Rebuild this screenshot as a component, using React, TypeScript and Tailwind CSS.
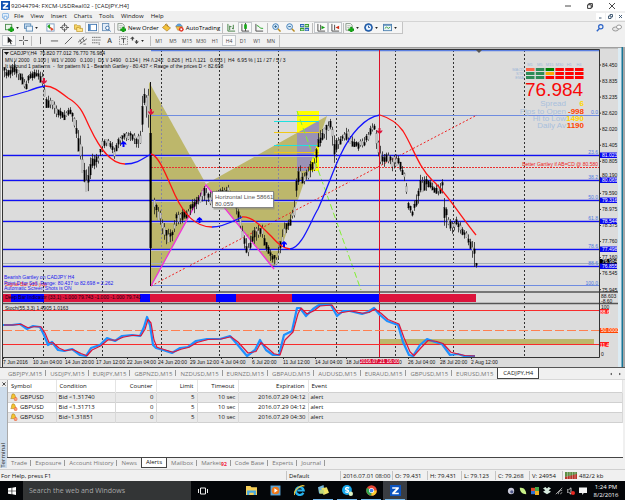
import type { ReactNode } from "react";

/* ---------- chart data ---------- */

// [x, high, low] envelope of price action in chart coordinates
const envelope: [number, number, number][] = [
  [3, 64, 78], [8, 68, 80], [14, 60, 77], [20, 69, 85], [26, 78, 92], [30, 68, 81], [36, 68, 80], [42, 72, 88],
  [46, 92, 112], [52, 97, 111], [58, 107, 121], [64, 109, 121], [70, 107, 116], [75, 114, 132], [80, 132, 168],
  [84, 160, 187], [87, 170, 200], [92, 149, 173], [98, 154, 166], [102, 138, 152], [108, 136, 147], [114, 145, 160],
  [118, 136, 149], [124, 131, 142], [130, 131, 142], [136, 133, 149], [140, 130, 148], [142, 92, 140], [144, 88, 108],
  [148, 84, 130], [154, 196, 216], [160, 208, 228], [165, 226, 244], [172, 228, 246], [176, 211, 228], [182, 207, 224],
  [188, 206, 218], [194, 194, 214], [198, 191, 206], [204, 184, 203], [208, 189, 207], [215, 190, 204], [222, 186, 198],
  [228, 184, 197], [234, 193, 208], [240, 213, 230], [244, 233, 250], [248, 243, 260], [252, 228, 246], [258, 224, 240],
  [262, 224, 239], [266, 238, 254], [272, 249, 266], [276, 255, 268], [280, 237, 256], [284, 221, 238], [289, 218, 230],
  [294, 198, 218], [297, 164, 192], [299, 161, 178], [303, 172, 188], [308, 163, 181], [314, 156, 174], [318, 128, 153],
  [322, 126, 146], [326, 118, 142], [330, 116, 130], [334, 134, 163], [338, 136, 150], [342, 132, 143], [347, 126, 144],
  [352, 136, 148], [358, 139, 151], [364, 136, 149], [370, 124, 138], [374, 121, 132], [377, 133, 162], [383, 153, 168],
  [388, 150, 165], [392, 156, 172], [397, 149, 166], [401, 160, 176], [405, 174, 186], [408, 198, 212], [412, 208, 219],
  [416, 190, 212], [420, 174, 198], [424, 170, 192], [428, 177, 191], [434, 184, 194], [438, 182, 199], [442, 179, 194],
  [444, 186, 233], [448, 213, 230], [452, 220, 234], [456, 216, 227], [460, 222, 238], [466, 230, 240], [470, 236, 252],
  [474, 240, 268], [476, 261, 268],
];

function wobble(i: number) {
  const v = Math.sin(i * 12.9898) * 43758.5453;
  return v - Math.floor(v);
}

function envelopeAt(x: number): [number, number] {
  for (let i = 1; i < envelope.length; i++) {
    const [x0, h0, l0] = envelope[i - 1];
    const [x1, h1, l1] = envelope[i];
    if (x <= x1) {
      const t = (x - x0) / (x1 - x0);
      return [h0 + (h1 - h0) * t, l0 + (l1 - l0) * t];
    }
  }
  return [261, 268];
}

const candles = Array.from({ length: 237 }, (_, i) => 4 + i * 2)
  .filter((x) => x < 149 || x > 152)
  .map((x, i) => {
    const [high, low] = envelopeAt(x);
    const range = low - high;
    const top = high + range * (0.2 + 0.3 * wobble(i));
    return {
      x,
      high: high + range * 0.3 * wobble(i + 500),
      low: low - range * 0.3 * wobble(i + 900),
      top,
      height: Math.max(1, range * (0.15 + 0.3 * wobble(i + 300))),
      hollow: wobble(i + 70) > 0.6,
    };
  });

const averages = [
  { color: "#1414ff", d: "M3 97Q8 97 14 95L28 91Q38 87 45 86" },
  { color: "#ff1414", d: "M45 86C53 86 59 91 68 98C82 106 84 116 90 128C99 147 110 164 125 164" },
  { color: "#1414ff", d: "M125 164C137 164 144 158 151 154" },
  { color: "#ff1414", d: "M151 154C159 156 166 175 175 195C184 214 195 227 212 227" },
  { color: "#1414ff", d: "M212 227C224 227 233 221 242 217" },
  { color: "#ff1414", d: "M242 217C252 216 262 227 272 237C280 246 284 248 290 249" },
  { color: "#1414ff", d: "M290 249C302 248 310 222 318 209C326 192 334 168 340 156C350 134 365 117 380 115" },
  { color: "#ff1414", d: "M380 115C390 118 398 124 403 131C413 147 418 166 432 180C446 192 456 210 476 235" },
];

const stochastic: [number, number][] = [
  [3, 325], [12, 325], [20, 324], [27, 329], [33, 326], [40, 327], [44, 335], [48, 345], [52, 342], [58, 350], [64, 351],
  [72, 349], [80, 355], [86, 356], [91, 348], [100, 345], [107, 338], [115, 341], [122, 336], [132, 335], [140, 336],
  [144, 327], [147, 317], [150, 325], [153, 345], [156, 348], [163, 350], [172, 353], [180, 348], [188, 347], [196, 341],
  [207, 339], [220, 339], [230, 336], [237, 344], [247, 356], [255, 350], [260, 340], [266, 350], [273, 355], [279, 355],
  [284, 335], [292, 331], [297, 308], [300, 308], [306, 316], [313, 309], [319, 305], [331, 305], [337, 316], [343, 311],
  [350, 311], [362, 314], [368, 312], [374, 308], [380, 315], [387, 321], [398, 325], [403, 342], [409, 355], [413, 356],
  [420, 345], [427, 339], [435, 342], [442, 344], [450, 355], [458, 354], [464, 356], [475, 356],
];

const asPoints = (pts: [number, number][]) => pts.map((p) => p.join(",")).join(" ");
const signal = stochastic.map(([x, y], i): [number, number] => {
  const prev = stochastic[Math.max(0, i - 1)][1];
  return [Math.min(x + 1, 475), y * 0.75 + prev * 0.25];
});

const priceTicks = [
  "84.450", "83.835", "83.235", "82.620", "82.020", "81.405", "80.805", "80.190", "79.590", "78.975", "78.375",
  "77.760", "77.160", "76.545", "75.945",
];

const levels = [
  { y: 155, price: "81.023", fib: "23.6" },
  { y: 180, price: "80.069", fib: "38.2" },
  { y: 200, price: "79.316", fib: "50.0" },
  { y: 221, price: "78.544", fib: "61.8" },
  { y: 249, price: "77.498", fib: "78.6" },
  { y: 266, price: "76.855", fib: "88.6" },
];

const dates: [number, string][] = [
  [3, "7 Jun 2016"], [33, "10 Jun 04:00"], [65, "14 Jun 20:00"], [96, "17 Jun 12:00"], [127, "22 Jun 04:00"],
  [158, "24 Jun 20:00"], [190, "29 Jun 12:00"], [221, "4 Jul 04:00"], [252, "6 Jul 20:00"], [283, "11 Jul 12:00"],
  [315, "14 Jul 04:00"], [346, "18 Jul"], [408, "26 Jul 04:00"], [440, "28 Jul 20:00"], [471, "2 Aug 12:00"],
];

const heat = [
  ["#ff6347", "#2e8b57", "#008000", "#ff0000", "#ff0000", "#ff0000"],
  ["#2e8b57", "#2e8b57", "#ffa500", "#ff0000", "#ff0000", "#ff0000"],
  ["#2e8b57", "#2e8b57", "#ff0000", "#ff0000", "#ff0000", "#ff0000"],
];

const stats: [string, string, string, number][] = [
  ["Spread", "6", "#ffd700", 106],
  ["Pips to Open", "-998", "#ff4500", 114],
  ["Hi to Low", "1490", "#ffd700", 121],
  ["Daily Av", "1190", "#ff4500", 128],
];

function Arrow({ x, y, up }: { x: number; y: number; up?: boolean }) {
  return (
    <path
      transform={`translate(${x} ${y})${up ? " scale(1 -1)" : ""}`}
      d="M-1 -3H1V0L3 -1L2.5 1L0 3L-2.5 1L-3 -1L-1 0Z"
      fill={up ? "#0000ff" : "#dc143c"}
    />
  );
}

function Chart() {
  return (
    <svg viewBox="0 47 625 320" className="block w-full font-['Liberation_Sans',sans-serif] text-[5px]" role="img" aria-label="CADJPY H4 chart">
      <rect x="0" y="47" width="625" height="320" fill="#f0f0f0" />
      <rect x="2" y="48" width="617" height="319" fill="#dcdcdc" />
      <rect x="0" y="47" width="625" height="1.5" fill="#a0a0a0" />
      <rect x="0" y="48" width="1" height="319" fill="#b0b0b0" />
      <rect x="618" y="48" width="4" height="319" fill="#dcebf3" />
      <rect x="621.5" y="47" width="1.5" height="320" fill="#187595" />
      <rect x="623" y="47" width="2" height="320" fill="#a6a6a6" />

      <g stroke="#333" strokeWidth="1" strokeDasharray="2 2">
        {[43.5, 102.5, 161.5, 219.5, 278.5, 336.5, 395.5, 453.5, 524.5].map((x) => (
          <path key={x} d={`M${x} 50V357`} />
        ))}
      </g>

      <path d="M149 82L206 184L151 286Z" fill="#bdb76b" />
      <path d="M206 184L327 116L274 269Z" fill="#bdb76b" />
      <rect x="297" y="111" width="22" height="60" fill="#ffff00" />
      <path d="M297 133L319 120.5V139L308 171H297Z" fill="#9a93b6" />
      <path d="M161.5 105V267M219.5 177V200M278.5 145V257" stroke="#8a86a0" strokeDasharray="2 2" />
      <path d="M274 121.5H319M274 145.5H319" stroke="#20e0e0" />
      <path d="M274 132.5H319M274 152.5H319" stroke="#f0c818" />

      <path d="M151 50.5H599" stroke="#5b7fe0" strokeWidth="1.5" />
      <path d="M151 115.5H599M151 285.5H599" stroke="#6f8ce0" />
      <path d="M3 263.5H599" stroke="#a4aeb8" />
      <path d="M151 167.5H599" stroke="#e83030" strokeDasharray="2 1" />
      <path d="M151 286L477 115" stroke="#f02020" strokeDasharray="2 2" />
      <path d="M297 111L361 290" stroke="#80f030" strokeDasharray="6 3" />
      {levels.map((l) => (
        <g key={l.y}>
          <path d={`M3 ${l.y + 1.5}H599`} stroke="#f2f2c4" />
          <path d={`M3 ${l.y + 0.5}H599`} stroke="#1010f4" strokeWidth="1.3" />
          <text x="598" y={l.y - 1} textAnchor="end" fill="#4f78e0">{l.fib}</text>
        </g>
      ))}
      <text x="598" y="114" textAnchor="end" fill="#4f78e0">0.0</text>
      <text x="598" y="285" textAnchor="end" fill="#4f78e0">100.0</text>
      <path d="M151 286L206 185L274 269" fill="none" stroke="#f030d8" strokeWidth="1.3" />

      {candles.map((c) => (
        <g key={c.x}>
          <path d={`M${c.x + 0.5} ${c.high}V${c.low}`} stroke="#222" strokeWidth="0.8" />
          <rect
            x={c.x - 0.2}
            y={c.top}
            width="1.5"
            height={c.height}
            fill={c.hollow ? "#c4c4c4" : "#000"}
            stroke={c.hollow ? "#666" : "#000"}
            strokeWidth="0.2"
          />
        </g>
      ))}
      <path d="M150.5 82V286" stroke="#111" />
      <rect x="149.5" y="133" width="2.2" height="115" fill="#000" />

      {averages.map((a) => (
        <path key={a.d} d={a.d} fill="none" stroke={a.color} strokeWidth="1.3" />
      ))}
      <Arrow x={44} y={81} />
      <Arrow x={151} y={112} />
      <Arrow x={379.5} y={131} />
      <Arrow x={123.5} y={144} up />
      <Arrow x={199.5} y={220} up />
      <Arrow x={284} y={244} up />
      <path d="M379.5 50V357" stroke="#dc1028" />
      <path d="M476 50L482 50L479 53Z" fill="#555" />

      <g fill="#111">
        <path d="M4 52H9L6.5 55Z" />
        <text x="10" y="55">CADJPY,H4&nbsp; 76.820 77.012 76.770 76.984</text>
        <text x="5" y="61.500">MN \/ 2000&nbsp;&nbsp; 0.100 |&nbsp; W1 \/ 2000&nbsp;&nbsp; 0.100 |&nbsp; D1 \/ 1490&nbsp;&nbsp; 0.134 |&nbsp; H4 /\.242&nbsp;&nbsp; 0.826 |&nbsp; H1 /\.121&nbsp;&nbsp; 0.653 |&nbsp; H4&nbsp; 6.95 % | 11 / 27 / 5 / 3</text>
        <text x="5" y="67.500">It is found 1 patterns&nbsp; -&nbsp; for pattern N 1 - Bearish Gartley - 80.437 &lt; Range of the prices D &lt; 82.698</text>
      </g>
      <text x="5" y="285.500" fill="#ff2020">Signal Bar v10 yop</text>
      <g fill="#1818ee">
        <text x="4" y="279">Bearish Gartley on CADJPY H4</text>
        <text x="4" y="284.500">Point D for Sell, Range: 80.437 to 82.698 = 2.262</text>
        <text x="4" y="290">Automatic Screen Shots is ON</text>
      </g>

      <g fill="#a0b8d8" className="text-[4px]">
        {["M1", "M5", "M15", "M30", "H1", "H4"].map((t, i) => (
          <text key={t} x={530 + i * 9.8} y="66" textAnchor="middle">{t}</text>
        ))}
        {["MACD", "STR", "EMA"].map((t, i) => (
          <text key={t} x="524" y={71 + i * 4} textAnchor="end">{t}</text>
        ))}
      </g>
      {heat.map((row, r) =>
        row.map((color, c) => <rect key={`${r}-${c}`} x={526 + c * 9.8} y={68 + r * 4} width="8.5" height="3" fill={color} />),
      )}
      <text x="525" y="96" fill="#f80808" className="text-[19px]">76.984</text>
      {stats.map(([label, value, color, y]) => (
        <g key={label} className="text-[8px]">
          <text x="566" y={y} textAnchor="end" fill="#a9c0dc">{label}</text>
          <text x="584" y={y} textAnchor="end" fill={color} className="font-bold">{value}</text>
        </g>
      ))}
      <text x="598" y="165.500" textAnchor="end" fill="#f02020">Better Gartley if AB=CD @ 80.580</text>

      <rect x="3" y="294" width="473" height="8" fill="#dc143c" />
      {[[11, 33], [140, 10], [216, 20], [292, 87]].map(([x, w]) => (
        <rect key={x} x={x} y="294" width={w} height="8" fill="#0000ff" />
      ))}
      <path d="M3 292H618M3 303.500H618" stroke="#555" strokeWidth="1.600" />
      <text x="5" y="299" fill="#220010">Deep Bar Indicator (33,1) -1.000 79.743 -1.000 -1.000 79.743</text>

      <rect x="380" y="339" width="214" height="5" fill="#bdb76b" />
      <path d="M3 310.500H599M3 344.500H599" stroke="#f82c2c" />
      <path d="M3 330.500H599" stroke="#ff7f50" strokeDasharray="9 3" />
      <polyline points={asPoints(stochastic)} fill="none" stroke="#1e90ff" strokeWidth="2.200" strokeLinejoin="round" />
      <polyline points={asPoints(signal)} fill="none" stroke="#dc143c" strokeWidth="1.200" strokeLinejoin="round" />
      <text x="5" y="309.500" fill="#111">Stoch(55,3,3) 1.4905 1.0163</text>

      <path d="M2.500 367V49.500H599.500V357.500H2.500" fill="none" stroke="#333" />
      {dates.map(([x, label]) => (
        <g key={label}>
          <path d={`M${x + 0.5} 357V359`} stroke="#333" />
          <text x={x} y="363.500" fill="#111">{label}</text>
        </g>
      ))}
      <text x="399" y="363.500" fill="#111">0</text>
      <rect x="360" y="359" width="39" height="5" fill="#dc1038" />
      <text x="379.500" y="363.300" textAnchor="middle" fill="#fff">2016.07.21 16:00</text>

      {priceTicks.map((p, i) => (
        <g key={p}>
          <path d={`M599 ${65 + i * 16.05}H601`} stroke="#333" />
          <text x="602" y={66.800 + i * 16.05 - (p === "80.190" ? 2 : 0)} fill="#111">{p}</text>
        </g>
      ))}
      <rect x="600" y="259" width="17" height="5" fill="#000" />
      <text x="602" y="263" fill="#fff">76.984</text>
      {levels.map((l) => (
        <g key={l.price}>
          <rect x="600" y={l.y - 2.5} width="17" height="5.500" fill="#0808f0" />
          <text x="602" y={l.y + 2} fill="#fff">{l.price}</text>
        </g>
      ))}
      <g fill="#111">
        <text x="601" y="298">88.603</text>
        <text x="601" y="303">-8.60</text>
        <text x="601" y="308.500">100</text>
        <text x="601" y="356">0</text>
      </g>
      <rect x="600" y="309" width="9" height="5" fill="#ff1c1c" />
      <text x="600" y="313.500" fill="#fff">88.6</text>
      <rect x="600" y="328" width="18" height="5" fill="#ff4500" />
      <text x="601" y="332.300" fill="#fff">50.0000</text>
      <rect x="600" y="342" width="9" height="5" fill="#ff1c1c" />
      <text x="600" y="346.500" fill="#fff">11.4</text>

      <rect x="213.500" y="192.500" width="61" height="17" fill="#8b8b7c" opacity="0.6" />
      <rect x="212.500" y="191.500" width="61" height="16" fill="#fff" stroke="#777" strokeWidth="0.8" />
      <g fill="#555" className="text-[6px]">
        <text x="215" y="198.500">Horizontal Line 58661</text>
        <text x="215" y="205.500">80.059</text>
      </g>
    </svg>
  );
}

/* ---------- toolbar ---------- */

function Icon({ children, size = "size-[9px]" }: { children: ReactNode; size?: string }) {
  return (
    <svg viewBox="0 0 10 10" className={`${size} shrink-0`} fill="none" strokeWidth="1" aria-hidden="true">
      {children}
    </svg>
  );
}

const plus = <path d="M6 4.500H8V6.500H10V8.500H8V10H6V8.500H4V6.500H6Z" fill="#12b012" stroke="#067806" strokeWidth="0.5" />;

const icons = {
  newChart: <><rect x="0.5" y="1.500" width="7" height="6" fill="#eaf4ea" stroke="#4a8a4a" />{plus}</>,
  profiles: <><rect x="0.5" y="1" width="7" height="5" fill="#cfe2f5" stroke="#5b8ab5" /><rect x="2.500" y="3.500" width="7" height="5.500" fill="#eef5fb" stroke="#5b8ab5" /></>,
  market: <><rect x="1" y="1" width="8" height="8" fill="#fff" stroke="#7c9cc0" /><path d="M2 3.500L4 2V6ZM3 4L5 5" fill="#18a018" stroke="#18a018" /><path d="M5 5L8 7L6 8Z" fill="#e04020" stroke="#e04020" /></>,
  target: <><circle cx="5" cy="5" r="3" stroke="#555" /><path d="M5 0V4M5 6V10M0 5H4M6 5H10" stroke="#555" /></>,
  navigator: <><path d="M0.500 2H3L4 3H7V7H0.500Z" fill="#f6d566" stroke="#b98a16" strokeWidth="0.7" /><path d="M3 5H5.500L6.500 6H9.500V9.500H3Z" fill="#ffe58a" stroke="#b98a16" strokeWidth="0.700" /></>,
  terminal: <><rect x="0.5" y="1.500" width="9" height="7" fill="#fff" stroke="#3c74b0" /><path d="M1 2H3V8H1Z" fill="#4c88c8" /></>,
  tester: <><rect x="0.500" y="0.500" width="7" height="8" fill="#e4eef8" stroke="#6c92b8" /><circle cx="6" cy="5.500" r="2" fill="#fff" stroke="#3b6fa8" /><path d="M7.500 7L9.500 9.500" stroke="#3b6fa8" /></>,
  order: <><path d="M1 0.500H6L8 2.500V8H1Z" fill="#f2f6f2" stroke="#8a968a" /><path d="M2.500 3H6M2.500 5H5" stroke="#8a968a" strokeWidth="0.6" />{plus}</>,
  editor: <><path d="M0.500 5L4 2L9.500 5.500L5.500 9Z" fill="#f4c33c" stroke="#a87514" strokeWidth="0.700" /><path d="M3.500 2L5 1L7 4" stroke="#a87514" /></>,
  auto: <><path d="M1 4C2 0 7 0 8 4Z" fill="#5aa0e0" stroke="#2a68a8" strokeWidth="0.600" /><path d="M1 4H8L6 8H3Z" fill="#f2c04c" stroke="#a87514" strokeWidth="0.500" /><circle cx="7" cy="7" r="2.600" fill="#e02c1c" /><rect x="6" y="6" width="2" height="2" fill="#fff" /></>,
  bars: <path d="M1 1V9H9M3 3V8M3 4H5M7 2V7M5.500 6H7" stroke="#3a7a3a" />,
  candles: <><path d="M1 1V9H9M5 0V9" stroke="#444" /><rect x="3.500" y="1.500" width="3" height="5" fill="#18a818" /></>,
  line: <><path d="M1 1V9H9" stroke="#444" /><path d="M2 3C4 2 5 7 9 6" stroke="#18a018" /></>,
  zoomIn: <><circle cx="4" cy="4" r="3.200" fill="#d8ecfa" stroke="#3c78b4" /><path d="M2.500 4H5.500M4 2.500V5.500" stroke="#286090" /><path d="M6.500 6.500L9.500 9.500" stroke="#b88a20" strokeWidth="1.600" /></>,
  zoomOut: <><circle cx="4" cy="4" r="3.200" fill="#d8ecfa" stroke="#3c78b4" /><path d="M2.500 4H5.500" stroke="#286090" /><path d="M6.500 6.500L9.500 9.500" stroke="#b88a20" strokeWidth="1.600" /></>,
  tile: <><path d="M0 1H4.700V4.700H0ZM5.300 5.300H10V9H5.300Z" fill="#2c64b8" /><path d="M5.300 1H10V4.700H5.300ZM0 5.300H4.700V9H0Z" fill="#38a030" /><path d="M1 3H4M6 3H9M1 7.500H4M6 7.500H9" stroke="#fff" /></>,
  scroll: <><path d="M1 1V9H9M4 2V8" stroke="#444" /><path d="M5 3L9 5L5 7Z" fill="#18a018" /></>,
  shift: <><path d="M1 1V9H9M4 2V8" stroke="#444" /><path d="M9 3L5 5L9 7Z" fill="#d03018" /></>,
  clock: <><circle cx="5" cy="5" r="4.300" fill="#2c74c8" stroke="#1c4c90" /><circle cx="5" cy="5" r="2.800" fill="#eef6ff" /><path d="M5 3V5H6.500" stroke="#1c4c90" /></>,
  template: <><rect x="0.5" y="1.500" width="9" height="7" fill="#e8f2fa" stroke="#4c80b0" /><path d="M1 2.500H9" stroke="#4c80b0" /><path d="M2 6L4 4.500L6 6L8 4.500" stroke="#38a030" /></>,
  cursor: <path d="M3 0.500V8L5 6.500L6.500 9.500L7.500 9L6.200 6H8.500Z" fill="#222" />,
  cross: <path d="M5 0V4M5 6V10M0 5H4M6 5H10" stroke="#555" />,
  vline: <path d="M5 1V9" stroke="#555" />,
  hline: <path d="M1 5.500H9" stroke="#555" />,
  trend: <path d="M1 9L9 1" stroke="#555" />,
  channel: <path d="M0 7L7 1M2 9L10 3M2 4L4 8M5 2L7 6M6 9H9" stroke="#555" strokeWidth="0.9" />,
  fibo: <path d="M0 1.500H10M0 4.500H10M0 7.500H7M8 7V10" stroke="#666" strokeDasharray="1.500 0.500" />,
  label: <><rect x="0.5" y="0.500" width="9" height="9" stroke="#777" strokeDasharray="1 1" /><path d="M2.500 3H7.500M5 3V8" stroke="#444" /></>,
  arrows: <path d="M0 3L3 0.500L5 3L3.500 3V5H2V3ZM5 6H6.500V4.500H8V6H10L7.200 9Z" fill="#444" />,
};

type IconName = keyof typeof icons;

function Tool({ icon, menu, pressed, label }: { icon: IconName; menu?: boolean; pressed?: boolean; label?: string }) {
  const box = menu ? "w-[19px] justify-start gap-[2px]" : label ? "gap-[2px] px-px" : "w-[14px] justify-center";
  return (
    <button
      type="button"
      aria-label={label ?? icon}
      aria-pressed={pressed}
      className={`flex h-[11px] shrink-0 items-center whitespace-nowrap ${box} ${pressed ? "border border-[#c4c8cc] bg-[#fafafa]" : ""}`}
    >
      <Icon>{icons[icon]}</Icon>
      {label && <span>{label}</span>}
      {menu && <Caret />}
    </button>
  );
}

function Caret() {
  return <svg viewBox="0 0 4 3" className="h-[2px] w-[3px]" aria-hidden="true"><path d="M0 0H4L2 3Z" fill="#222" /></svg>;
}

function Divider() {
  return <span className="mx-px h-[10px] w-px shrink-0 bg-[#bdbdbd]" />;
}

function Toolbars() {
  return (
    <div className="bg-[#f0f0f0]">
      <div className="flex h-[13px] items-center border-t border-[#d4d4d4]">
        <div className="flex h-[12px] items-center border-r border-b border-[#c4c4c4] bg-[#f5f5f5] pl-[5px]">
          <Tool icon="newChart" menu />
          <Tool icon="profiles" menu />
          <Tool icon="market" />
          <Tool icon="target" />
          <Tool icon="navigator" />
          <Tool icon="terminal" pressed />
          <Tool icon="tester" />
          <Divider />
          <Tool icon="order" label="New Order" />
          <Tool icon="editor" />
          <Tool icon="auto" label="AutoTrading" />
          <Divider />
          <Tool icon="bars" />
          <Tool icon="candles" pressed />
          <Tool icon="line" />
          <Divider />
          <Tool icon="zoomIn" />
          <Tool icon="zoomOut" />
          <Tool icon="tile" />
          <Divider />
          <Tool icon="scroll" pressed />
          <Tool icon="shift" pressed />
          <Divider />
          <Tool icon="order" menu />
          <Tool icon="clock" menu />
          <Tool icon="template" menu />
        </div>
        <div className="ml-auto flex items-center gap-2 pr-[3px]">
          <Icon size="size-[8px]"><circle cx="6" cy="3.500" r="2.700" stroke="#2c64c8" strokeWidth="1.500" /><path d="M4 6L1 9" stroke="#2c64c8" strokeWidth="1.800" /></Icon>
          <Icon size="size-[10px]"><ellipse cx="3.500" cy="6" rx="3" ry="2" fill="#e8e8e8" stroke="#999" /><ellipse cx="7" cy="4" rx="2.500" ry="2" fill="#fff" stroke="#999" /></Icon>
        </div>
      </div>
      <div className="flex h-[13px] items-center">
        <div className="flex h-3 items-center border-r border-[#c4c4c4] pr-px pl-[2px] text-[5px] text-[#444]">
          <Tool icon="cursor" pressed />
          <Tool icon="cross" />
          <Divider />
          <Tool icon="vline" />
          <Tool icon="hline" />
          <Tool icon="trend" />
          <Tool icon="channel" />
          <Tool icon="fibo" />
          <button type="button" className="w-[13px] text-center text-[7px] font-semibold">A</button>
          <Tool icon="label" />
          <Tool icon="arrows" menu />
          <Divider />
          {["M1", "M5", "M15", "M30", "H1", "H4", "D1", "W1", "MN"].map((t) => (
            <button key={t} type="button" className={`h-[11px] w-[14px] text-center ${t === "H4" ? "border border-[#c4c8cc] bg-[#fafafa]" : ""}`}>
              {t}
            </button>
          ))}
        </div>
      </div>
    </div>
  );
}

/* ---------- window frame ---------- */

function TitleBar() {
  return (
    <header>
      <div className="flex h-[11px] items-center bg-white text-[#222]">
        <svg viewBox="0 0 10 10" className="ml-px size-[9px]" aria-hidden="true">
          <rect width="10" height="10" fill="#0d4fb0" />
          <path d="M2 2H8V3.500L4.500 7H8V8.500H2V7L5.500 3.500H2Z" fill="#fff" />
        </svg>
        <h1 className="ml-px">92044794: FXCM-USDReal02 - [CADJPY,H4]</h1>
        <div className="ml-auto flex items-center gap-4 pr-[10px]">
          <button type="button" aria-label="Minimize"><Icon size="size-[6px]"><path d="M0 5H10" stroke="#333" strokeWidth="1.500" /></Icon></button>
          <button type="button" aria-label="Restore"><Icon size="size-[6px]"><path d="M1 3H7V9H1ZM3 3V1H9V7H7" stroke="#222" strokeWidth="1.500" /></Icon></button>
          <button type="button" aria-label="Close"><Icon size="size-[6px]"><path d="M0 0L10 10M10 0L0 10" stroke="#333" strokeWidth="1.500" /></Icon></button>
        </div>
      </div>
      <nav className="flex h-[10px] items-center bg-[#f0f0f0] text-[#111]">
        <span className="mr-[5px] ml-[2px]">
          <Icon size="size-[7px]"><rect x="0.5" y="0.500" width="9" height="7" rx="2" fill="#e4f0fb" stroke="#5a9ad8" /><path d="M3 4.500H7V9H3Z" fill="#fff" stroke="#5a9ad8" /></Icon>
        </span>
        <div className="flex gap-[7px]">
          {["File", "View", "Insert", "Charts", "Tools", "Window", "Help"].map((m) => (
            <button key={m} type="button">{m}</button>
          ))}
        </div>
        <div className="ml-auto flex gap-px">
          {["M2 8H7", "M1 4H6V9H1ZM4 4V1H9V6H6", "M2 2L8 8M8 2L2 8"].map((d) => (
            <button key={d} type="button" aria-label="Chart window control" className="flex h-[7px] w-[9px] items-center justify-center bg-white">
              <Icon size="size-[5px]"><path d={d} stroke="#35506c" strokeWidth="1.800" /></Icon>
            </button>
          ))}
        </div>
      </nav>
    </header>
  );
}

function ChartTabs() {
  const tabs = ["GBPJPY", "USDJPY", "EURJPY", "GBPNZD", "NZDUSD", "EURNZD", "GBPAUD", "AUDUSD", "EURAUD", "GBPUSD", "EURUSD"];
  return (
    <div className="flex h-3 items-center border-t border-[#555] bg-[#f0f0f0] pl-1 text-[#777]">
      {tabs.map((t, i) => (
        <button key={t} type="button" className="relative h-full px-1">
          {t},M15
          {i < tabs.length - 1 && <span className="absolute top-[2px] right-0 h-[6px] w-px bg-[#999]" />}
        </button>
      ))}
      <button type="button" className="-mt-px h-[11px] border border-t-0 border-[#444] bg-white px-[5px] text-[#222]">CADJPY,H4</button>
      <div className="ml-auto flex gap-[7px] pr-1">
        <svg viewBox="0 0 3 4" className="h-1 w-[2px]"><path d="M3 0V4L0 2Z" fill="#555" /></svg>
        <svg viewBox="0 0 3 4" className="h-1 w-[2px]"><path d="M0 0V4L3 2Z" fill="#555" /></svg>
      </div>
    </div>
  );
}

const alerts = [
  ["GBPUSD", "Bid <1.31740", "0", "5", "10 sec", "2016.07.29 04:12", "alert"],
  ["GBPUSD", "Bid <1.31713", "0", "5", "10 sec", "2016.07.29 04:12", "alert"],
  ["GBPUSD", "Bid>1.31851", "0", "5", "10 sec", "2016.07.29 04:30", "alert"],
];

function Terminal() {
  return (
    <section className="flex flex-1 border-t border-[#d8d8d8] bg-[#f0f0f0]">
      <div className="flex w-[7px] flex-col items-center justify-between bg-[#cddceb] text-[#222]">
        <button type="button" aria-label="Close terminal" className="flex h-[7px] w-full items-center justify-center bg-[#f0f0f0]">
          <Icon size="size-[4px]"><path d="M1 1L9 9M9 1L1 9" stroke="#222" strokeWidth="2" /></Icon>
        </button>
        <span className="rotate-180 leading-[7px] [writing-mode:vertical-rl]">Terminal</span>
      </div>
      <div className="flex min-w-0 flex-1 flex-col">
        <div className="flex-1 border-l border-[#aaa] bg-white">
          <table className="w-full table-fixed border-collapse text-left text-[#111]">
            <colgroup>
              <col className="w-[48px]" />
              <col className="w-[59px]" />
              <col className="w-[41px]" />
              <col className="w-[41px]" />
              <col className="w-[41px]" />
              <col className="w-[70px]" />
              <col />
            </colgroup>
            <thead>
              <tr className="h-3">
                {["Symbol", "Condition", "Counter", "Limit", "Timeout", "Expiration", "Event"].map((h, i) => (
                  <th key={h} className={`border-r border-[#e4e4e4] px-[3px] font-normal ${i > 1 && i < 6 ? "text-right" : ""}`}>{h}</th>
                ))}
              </tr>
            </thead>
            <tbody>
              {alerts.map((row) => (
                <tr key={row[1]} className="h-[10px] border-y border-[#d0d0d0] odd:bg-[#e9e9e9]">
                  {row.map((cell, i) => (
                    <td key={i} className={`border-r border-[#d8d8d8] px-[2px] whitespace-nowrap ${i > 1 && i < 6 ? "text-right" : ""}`}>
                      {i === 0 ? (
                        <span className="flex items-center gap-[2px]">
                          <Icon size="size-[8px]"><path d="M1 7C3 5 1 1 4 1C7 1 6 5 8 7Z" fill="#f4c430" stroke="#a87a18" strokeWidth="0.700" /><circle cx="7" cy="7.500" r="2.300" fill="#f06030" /><path d="M5.500 7.500H8.500" stroke="#fff" /></Icon>
                          {cell}
                        </span>
                      ) : cell}
                    </td>
                  ))}
                </tr>
              ))}
            </tbody>
          </table>
        </div>
        <div className="flex h-[11px] items-center border-t border-[#444] text-[#777]">
          {["Trade", "Exposure", "Account History", "News", "Alerts", "Mailbox", "Market", "Code Base", "Experts", "Journal"].map((t) => (
            <button
              key={t}
              type="button"
              className={`relative h-[10px] px-1 ${t === "Alerts" ? "-mt-px border border-t-0 border-[#444] bg-white text-[#111]" : ""}`}
            >
              {t}
              {t === "Market" && <sub className="text-[5px] font-bold text-[#f01838]">92</sub>}
              {t !== "Alerts" && t !== "News" && <span className="absolute top-[2px] right-0 h-[6px] w-px bg-[#999]" />}
            </button>
          ))}
        </div>
      </div>
      <div className="w-[2px]" />
    </section>
  );
}

function StatusBar() {
  const cell = "flex h-[9px] shrink-0 items-center whitespace-nowrap border-l border-[#c4c4c4] pl-[2px]";
  return (
    <footer className="mt-px flex h-3 items-center border-t border-[#d0d0d0] bg-[#f0f0f0] text-[#111]">
      <span className="flex-1 pl-px">For Help, press F1</span>
      <span className={`${cell} w-[54px]`}>Default</span>
      <span className={`${cell} w-[52px]`}>2016.07.01 08:00</span>
      <span className={`${cell} w-[35px]`}>O: 79.431</span>
      <span className={`${cell} w-[34px]`}>H: 79.431</span>
      <span className={`${cell} w-[34px]`}>L: 79.123</span>
      <span className={`${cell} w-[34px]`}>C: 79.268</span>
      <span className={`${cell} w-[33px]`}>V: 24954</span>
      <span className={`${cell} w-[63px] gap-[2px]`}>
        <svg viewBox="0 0 12 7" className="h-[7px] w-3" aria-hidden="true">
          <path d="M0 0H12V3L0 5Z" fill="#5d8f45" />
          <path d="M0 5L12 2V7H0Z" fill="#b83228" />
          <path d="M2.500 0V7M5 0V7M7.500 0V7M10 0V7" stroke="#eee" strokeWidth="0.400" />
        </svg>
        482/2 kb
      </span>
    </footer>
  );
}

/* ---------- taskbar ---------- */

const apps: { name: string; art: ReactNode; open?: boolean; active?: boolean }[] = [
  { name: "File Explorer", art: <><path d="M0 1H4L5 2H10V9H0Z" fill="#f6cf58" /><path d="M1 5H9V9H7V7H3V9H1Z" fill="#48a8e0" /></> },
  { name: "Media Player", art: <><rect x="0.500" y="0.500" width="9" height="9" fill="#5aa4d8" /><circle cx="5" cy="5" r="3.500" fill="#f07818" /><path d="M4 3L7 5L4 7Z" fill="#fff" /></> },
  { name: "Internet Explorer", art: <><path d="M8.500 7A3.600 3.600 0 1 1 8.800 5H3" stroke="#28b4f0" strokeWidth="2" /><path d="M0.500 9C-1 6 6 -1 9.500 1" stroke="#f4c838" /></> },
  { name: "Notes", art: <><path d="M0 2L5 0L6 6L1 8Z" fill="#78b8d8" /><path d="M3 3L8 2L10 7L5 9Z" fill="#f0e468" /><path d="M1 5L5 4L6 8L2 8Z" fill="#c0d878" /></>, open: true },
  { name: "Skype", art: <><circle cx="4.500" cy="4.500" r="4.500" fill="#18a8ec" /><path d="M6.500 3C4 1 2 4 4.500 4.500C7 5 6 7.500 3 6" stroke="#fff" strokeWidth="1.300" /><circle cx="8" cy="8" r="2" fill="#dff4c4" /></>, open: true },
  { name: "Chrome", art: <><circle cx="5" cy="5" r="4.800" fill="#e84838" /><path d="M5 5L1 2.400A4.800 4.800 0 0 0 5 9.800Z" fill="#30a850" /><path d="M5 5H9.800A4.800 4.800 0 0 1 5 9.800Z" fill="#f8cc30" /><circle cx="5" cy="5" r="2.300" fill="#fff" /><circle cx="5" cy="5" r="1.700" fill="#4080f0" /></>, open: true },
  { name: "MetaTrader", art: <><rect width="10" height="10" fill="#0c54c0" /><path d="M2 2H8V3.500L4.500 7H8V8.500H2V7L5.500 3.500H2Z" fill="#fff" /></>, open: true, active: true },
];

const tray: ReactNode[] = [
  <><circle cx="5" cy="5" r="4" fill="#c8c8d8" /><circle cx="6" cy="6" r="2" fill="#505888" /></>,
  <path d="M1 1C6 0 9 4 9 9C4 9 1 6 1 1Z" fill="#c8f088" />,
  <><path d="M0 1H5V5H0Z" fill="#e04828" /><path d="M5 0H10V5H5Z" fill="#48a848" /><path d="M0 5H5V9H0Z" fill="#3070d0" /><path d="M5 5H10V10H5Z" fill="#f0b020" /></>,
  <path d="M0 2L3 0L5 2L7 0L10 2L7 4L10 6L5 9L0 6L3 4Z" fill="#d8ece0" />,
  <path d="M1 9L9 1M4 9C4 7 6 4 9 4M7 9C7 8 8 7 9 7" stroke="#ccc" />,
  <><path d="M0 3.500H2L5 1V9L2 6.500H0Z" stroke="#eee" /><circle cx="7.500" cy="7.500" r="2.500" fill="#e82820" /></>,
  <path d="M0 0.500H10V7.500H6L4 10V7.500H0Z" fill="#f4f4f4" />,
];

function Taskbar() {
  return (
    <div className="flex h-[19px] shrink-0 items-center bg-[#040609] text-white">
      <button type="button" aria-label="Start" className="flex h-full w-[23px] items-center justify-center">
        <Icon size="size-[8px]"><path d="M0 1.500L4.500 1V4.700H0ZM5.300 0.800L10 0V4.700H5.300ZM0 5.300H4.500V9L0 8.500ZM5.300 5.300H10V10L5.300 9.200Z" fill="#fff" /></Icon>
      </button>
      <input
        type="search"
        aria-label="Search the web and Windows"
        placeholder="Search the web and Windows"
        className="h-full w-[168px] bg-[#333536] px-[6px] text-[7px] placeholder:text-[#a8a8a8]"
      />
      <button type="button" aria-label="Task view" className="flex w-6 items-center justify-center">
        <Icon size="size-[10px]"><path d="M2.500 2H7.500V8H2.500ZM0.500 3V7M9.500 3V7" stroke="#eee" /></Icon>
      </button>
      <div className="ml-6 flex h-full">
        {apps.map((a) => (
          <button
            key={a.name}
            type="button"
            aria-label={a.name}
            className={`flex h-full w-6 items-center justify-center px-[2px] ${a.active ? "bg-[#3a3d42]" : ""}`}
          >
            <span className={`flex h-full w-full items-center justify-center border-b ${a.open ? "border-[#76b9ed]" : "border-transparent"}`}>
              <Icon size="size-[11px]">{a.art}</Icon>
            </span>
          </button>
        ))}
      </div>
      <div className="ml-auto flex items-center gap-1">
        {tray.map((t, i) => <Icon key={i} size="size-[8px]">{t}</Icon>)}
      </div>
      <div className="mr-1 ml-1 w-[30px] text-center leading-[8px]">
        <div>1:24 PM</div>
        <div>8/2/2016</div>
      </div>
    </div>
  );
}

export default function App() {
  return (
    <div className="flex min-h-screen flex-col bg-[#f0f0f0] font-['Open_Sans','Noto_Sans',sans-serif] text-[6px] leading-[8px]">
      <TitleBar />
      <Toolbars />
      <Chart />
      <ChartTabs />
      <Terminal />
      <StatusBar />
      <Taskbar />
    </div>
  );
}
